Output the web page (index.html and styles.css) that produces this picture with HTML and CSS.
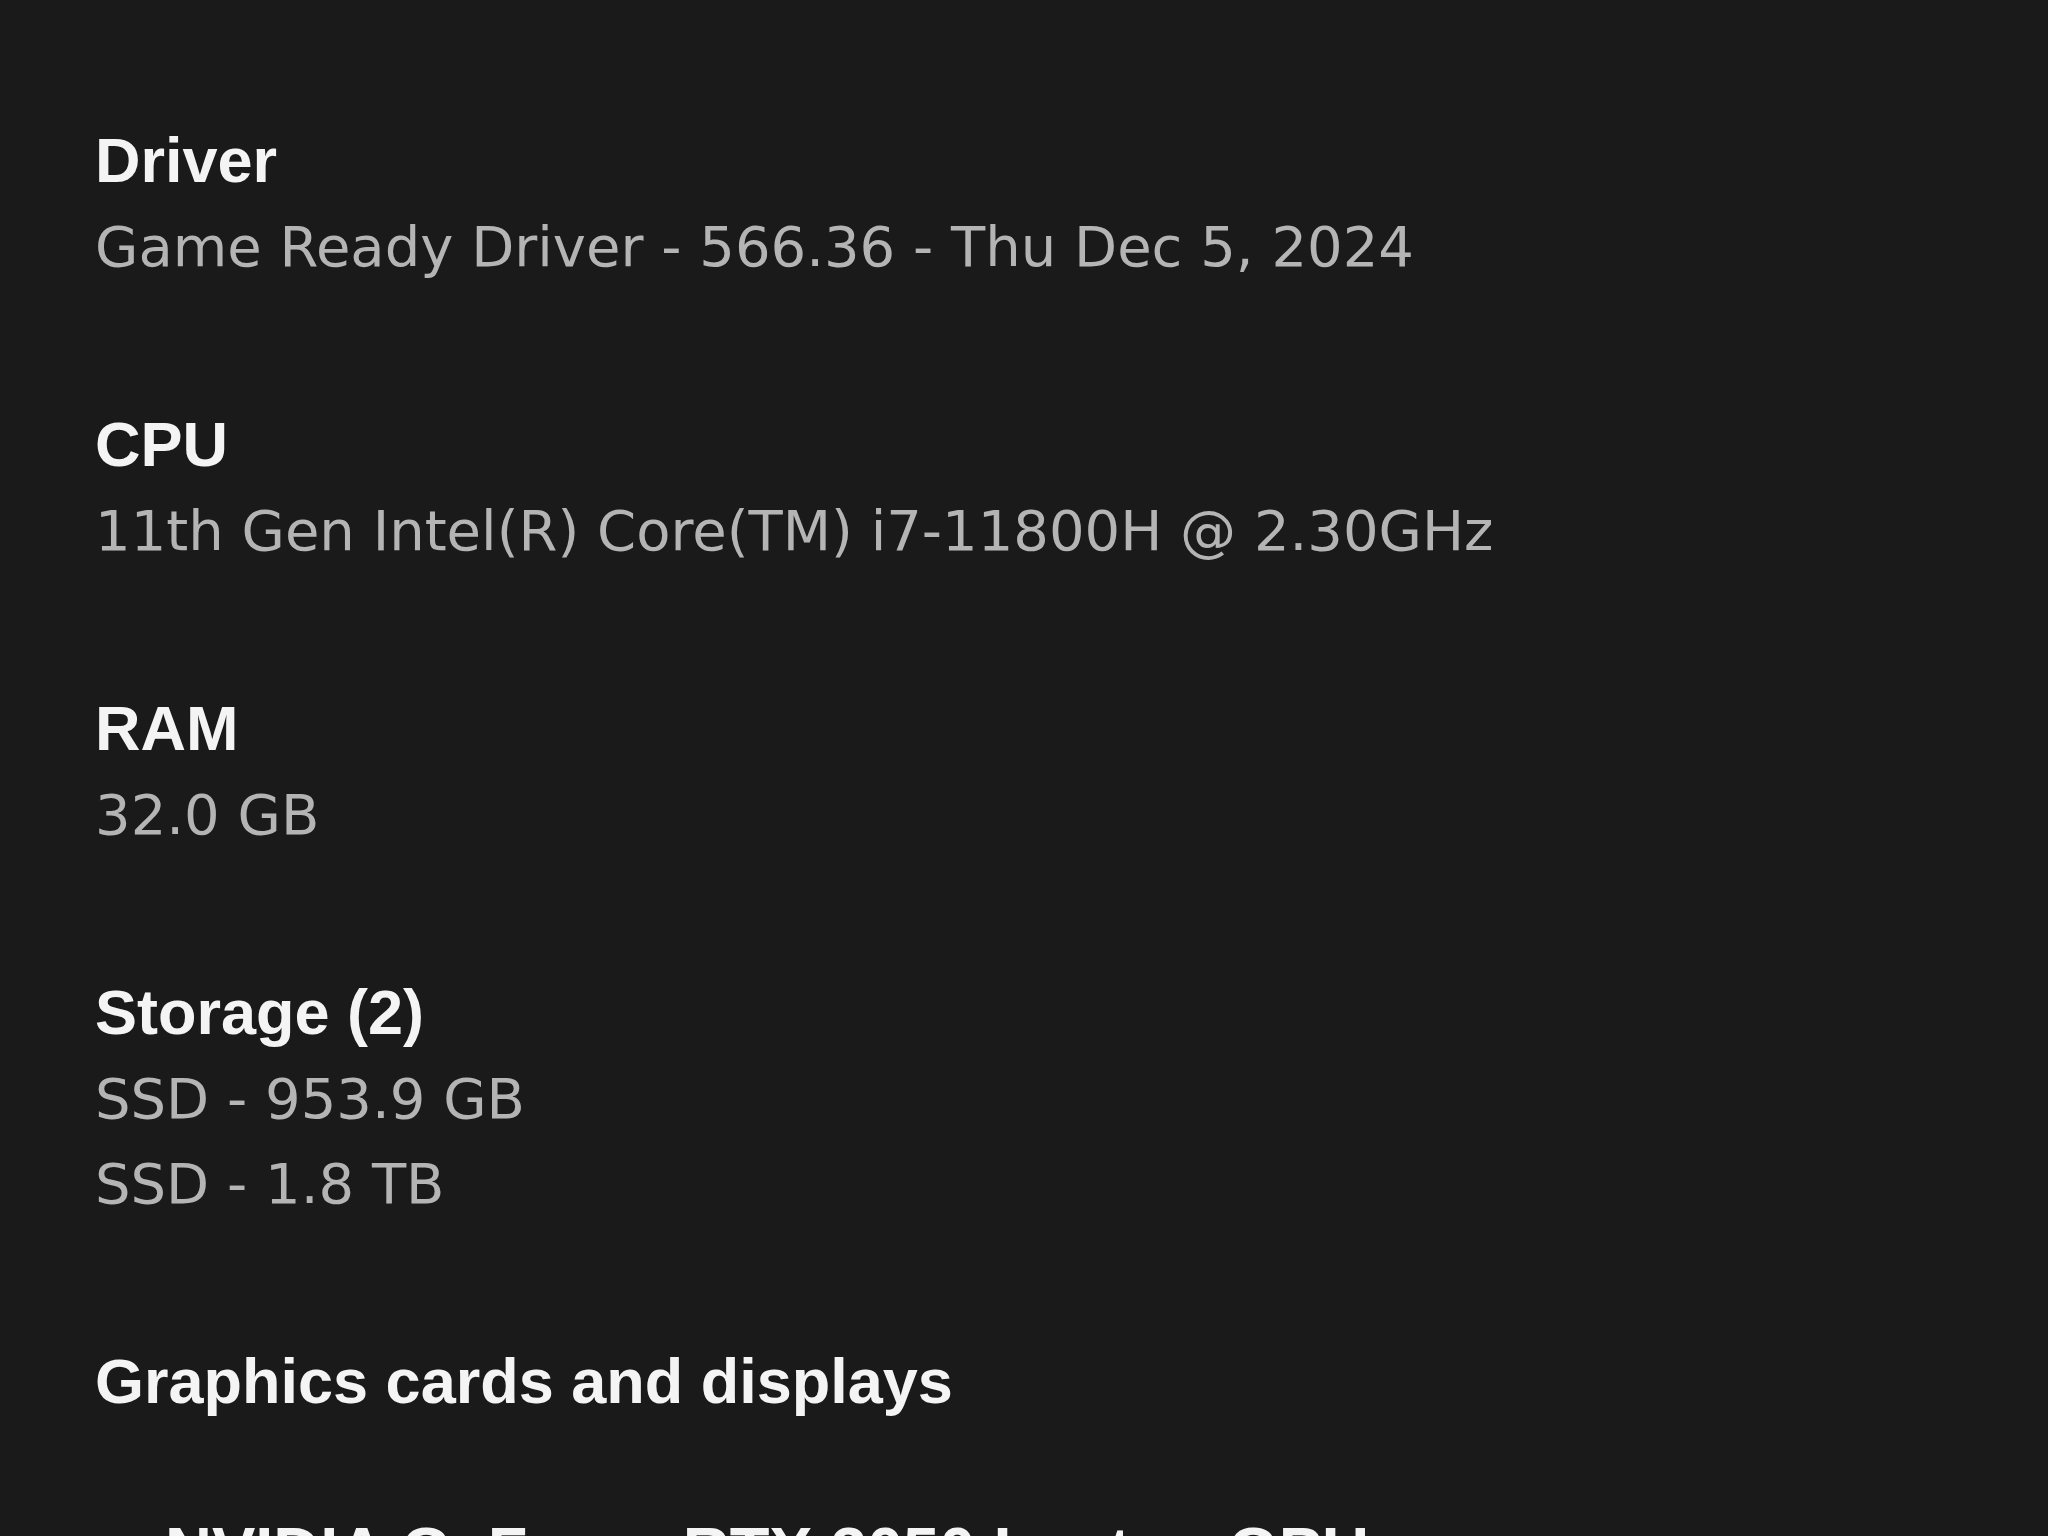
FILE: index.html
```html
<!DOCTYPE html>
<html lang="en">
<head>
<meta charset="utf-8">
<title>System Info</title>
<link rel="stylesheet" href="styles.css">
</head>
<body>
<main class="panel">
  <section class="spec">
    <h2 class="spec-label">Driver</h2>
    <p class="spec-value">Game Ready Driver - 566.36 - Thu Dec 5, 2024</p>
  </section>
  <section class="spec">
    <h2 class="spec-label">CPU</h2>
    <p class="spec-value">11th Gen Intel(R) Core(TM) i7-11800H @ 2.30GHz</p>
  </section>
  <section class="spec">
    <h2 class="spec-label">RAM</h2>
    <p class="spec-value">32.0 GB</p>
  </section>
  <section class="spec">
    <h2 class="spec-label">Storage (2)</h2>
    <p class="spec-value">SSD - 953.9 GB</p>
    <p class="spec-value">SSD - 1.8 TB</p>
  </section>
  <section class="spec">
    <h2 class="spec-label">Graphics cards and displays</h2>
    <div class="gpu-list">
      <p class="gpu-name">NVIDIA GeForce RTX 3050 Laptop GPU</p>
    </div>
  </section>
</main>
</body>
</html>
```
FILE: styles.css
```css
html, body {
  margin: 0;
  padding: 0;
  background: #1a1a1a;
  height: 100%;
  overflow: hidden;
}

.panel {
  padding: 116px 0 0 95px;
  display: flex;
  flex-direction: column;
  gap: 111px;
  font-family: "Liberation Sans", Arial, sans-serif;
}

.spec {
  display: flex;
  flex-direction: column;
}

.spec-label {
  margin: 0;
  font-size: 63px;
  line-height: 88px;
  font-weight: 700;
  color: #f4f4f4;
}

.spec-value {
  margin: 0;
  font-family: "DejaVu Sans", Verdana, sans-serif;
  font-size: 56px;
  line-height: 85px;
  font-weight: 400;
  color: #b4b4b4;
}

.gpu-list {
  padding: 83px 0 0 70px;
}

.gpu-name {
  margin: 0;
  font-size: 65px;
  line-height: 86px;
  font-weight: 700;
  color: #f4f4f4;
}
```
